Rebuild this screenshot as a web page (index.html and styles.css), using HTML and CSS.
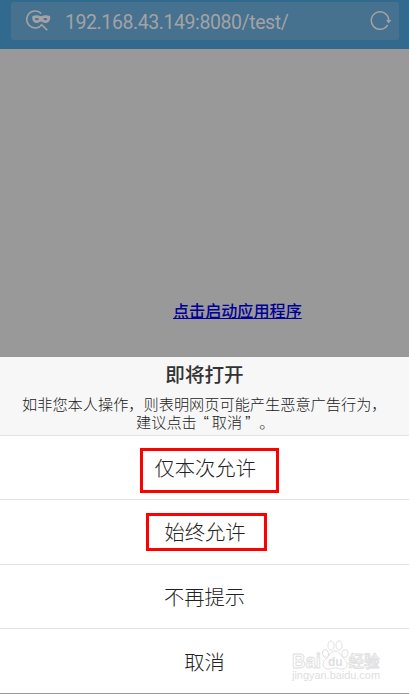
FILE: index.html
```html
<!DOCTYPE html>
<html lang="zh-CN">
<head>
<meta charset="utf-8">
<title>即将打开</title>
<link rel="stylesheet" href="styles.css">
</head>
<body>
<header class="bar">
  <div class="address">
    <svg class="mask-icon" width="26" height="24" viewBox="0 0 26 24" fill="none">
      <path d="M16.200 4.600A8.400 8.400 0 1 0 12 18.700M16 15L22.300 21.300M12 18.700Q14.500 18.300 16.500 16" stroke="#a3a3a5" stroke-width="1.600"/>
      <path fill-rule="evenodd" fill="#a3a3a5" d="M7.500 7C10 6 13 6 16 7.200C19 6 22 6 25 7C26 10.500 24 14 20.500 14C18.300 14 17.200 12.500 16 12.500C14.800 12.500 13.700 14 11.800 14C8.500 14 6.500 10.500 7.500 7ZM9.500 10.100Q12 12.500 14.200 10Q12 8 9.500 10.100ZM18 10Q20.300 12.500 22.700 10.100Q20.300 8 18 10Z"/>
    </svg>
    <span class="url">192.168.43.149:8080/test/</span>
    <svg class="reload" width="22" height="22" viewBox="0 0 22 22" fill="none">
      <path d="M17.600 14.800A8.700 8.700 0 1 1 18.700 10.500" stroke="#a3a3a5" stroke-width="1.500"/>
      <path d="M16.200 10H21.200L18.700 13.400Z" fill="#a3a3a5"/>
    </svg>
  </div>
</header>
<main class="page"><a class="launch" href="#">点击启动应用程序</a></main>
<section class="sheet">
  <div class="intro">
    <h1 class="title">即将打开</h1>
    <p class="note">如非您本人操作，则表明网页可能产生恶意广告行为，</p>
    <p class="note note-end">建议点击<span class="quote open">“</span>取消<span class="quote close">”</span>。</p>
  </div>
  <div class="option"><span class="box once">仅本次允许</span></div>
  <div class="option"><span class="box always">始终允许</span></div>
  <div class="option">不再提示</div>
  <div class="option last">取消</div>
  <svg class="watermark" width="94" height="48" viewBox="0 0 94 48">
    <g fill="#fff" stroke="#dedede" stroke-width="0.900">
      <text class="brand" x="1" y="30" textLength="29" lengthAdjust="spacingAndGlyphs">Bai</text>
      <ellipse cx="34.500" cy="15.500" rx="3" ry="4" transform="rotate(-15 34.500 15.500)"/>
      <ellipse cx="40" cy="7.500" rx="3" ry="4.500"/>
      <ellipse cx="48" cy="7.500" rx="3" ry="4.500"/>
      <ellipse cx="54" cy="15.500" rx="3" ry="4" transform="rotate(15 54 15.500)"/>
      <path d="M44 13C40 13 38 18 35 21C30 25 32 31 37 31C40 31 41 30 44 30C47 30 48 31 51 31C57 31 58 25 53 21C50 18 48 13 44 13Z"/>
      <text class="exp" x="57.500" y="29" textLength="31" lengthAdjust="spacingAndGlyphs">经验</text>
    </g>
    <text class="du" x="37" y="28">du</text>
    <text class="domain" x="1" y="41" textLength="88" lengthAdjust="spacingAndGlyphs">jingyan.baidu.com</text>
  </svg>
</section>
</body>
</html>
```

FILE: styles.css
```css
* { box-sizing: border-box; }
body {
  margin: 0;
  height: 694px;
  display: flex;
  flex-direction: column;
  overflow: hidden;
  font-family: "Noto Sans CJK SC", sans-serif;
  font-weight: 300;
  color: #222;
}
.bar { height: 49px; padding: 2px 10px 0 11px; background: #32698f; }
.address {
  height: 38px;
  display: flex;
  align-items: center;
  background: #46718f;
  border-radius: 2px;
}
.mask-icon { margin-left: 14px; }
.url {
  margin-left: 14px;
  width: 223px;
  padding-top: 2px;
  font-family: Roboto, sans-serif;
  font-weight: 400;
  font-size: 19.5px;
  letter-spacing: -0.42px;
  white-space: nowrap;
  color: #a3a3a5;
}
.reload { margin-left: auto; margin-right: 7px; }
.page {
  height: 308px;
  padding: 249px 0 0 173px;
  background: #999;
}
.launch {
  display: block;
  width: 129px;
  font-size: 16.1px;
  line-height: 24px;
  font-weight: 500;
  color: #000099;
  white-space: nowrap;
}
.sheet {
  position: relative;
  height: 337px;
  background: #fff;
  border-bottom: 1px solid #999;
}
.intro {
  height: 79px;
  padding-top: 3px;
  background: #f7f7f7;
  border-bottom: 1px solid #e4e4e4;
  text-align: center;
}
.title { margin: 0; font-size: 19.6px; font-weight: 500; line-height: 28px; color: #333; }
.note {
  display: flex;
  margin: 6px 0 0 22px;
  font-size: 15.2px;
  line-height: 18px;
  white-space: nowrap;
}
.note-end { margin: 0 0 0 136px; }
.quote {
  width: 15px;
  font-family: "Liberation Sans", sans-serif;
  text-align: right;
  padding-right: 3px;
}
.close { width: 17px; text-align: left; padding: 0 0 0 3px; }
.option {
  height: 64.300px;
  display: flex;
  align-items: center;
  justify-content: center;
  border-bottom: 1px solid #e4e4e4;
  font-size: 20.3px;
  padding-bottom: 1px;
}
.last { border: 0; }
.box {
  display: flex;
  align-items: center;
  border: 3px solid #f00;
  white-space: nowrap;
}
.once { width: 139px; height: 45px; margin-top: 6px; margin-left: 9px; padding: 0 0 6px 12px; }
.always { width: 121px; height: 38px; margin-left: 3px; margin-top: 1px; padding: 0 0 1px 16px; }
.watermark { position: absolute; left: 291px; top: 281px; }
.brand, .du, .domain { font-family: "Liberation Sans", sans-serif; font-weight: 700; }
.brand { font-size: 20px; }
.exp { font-size: 16px; font-weight: 500; }
.du { font-size: 12px; fill: #dedede; }
.domain { font-size: 10px; font-weight: 400; fill: #dedede; }
```
